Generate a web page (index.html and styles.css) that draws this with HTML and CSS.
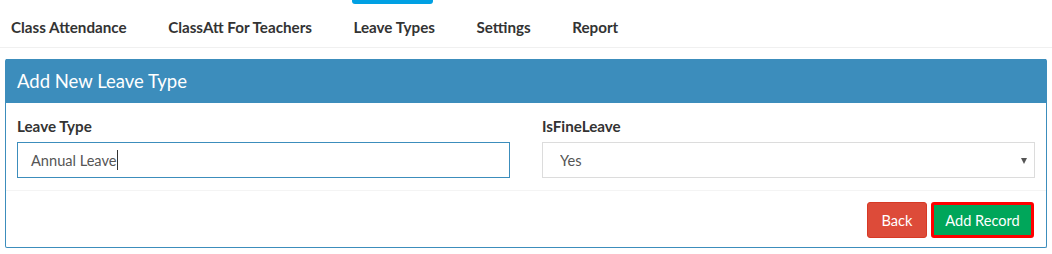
FILE: index.html
```html
<!DOCTYPE html>
<html lang="en">
<head>
    <meta charset="UTF-8">
    <title>Leave Types</title>
    <link rel="stylesheet" href="styles.css">
</head>
<body>
    <nav class="tabs">
        <a href="#">Class Attendance</a>
        <a href="#">ClassAtt For Teachers</a>
        <a href="#" class="active">Leave Types</a>
        <a href="#">Settings</a>
        <a href="#">Report</a>
    </nav>

    <div class="box">
        <div class="box-header">Add New Leave Type</div>

        <div class="box-body">
            <div class="field">
                <label for="leaveType">Leave Type</label>
                <div class="fake-input focused">Annual Leave<span class="caret"></span></div>
            </div>
            <div class="field">
                <label for="isFine">IsFineLeave</label>
                <div class="select-wrap">
                    <select id="isFine">
                        <option>Yes</option>
                        <option>No</option>
                    </select>
                </div>
            </div>
        </div>

        <div class="box-footer">
            <button class="btn btn-back">Back</button>
            <button class="btn btn-add">Add Record</button>
        </div>
    </div>
</body>
</html>
```

FILE: styles.css
```css
* {
    margin: 0;
    padding: 0;
    box-sizing: border-box;
}

body {
    font-family: Lato, "Noto Sans", sans-serif;
    font-size: 14.6px;
    color: #333;
    background: #fff;
}

/* Tabs */
.tabs {
    display: flex;
    gap: 41.5px;
    height: 48px;
    padding-left: 11px;
    border-bottom: 1px solid #f0f0f0;
}

.tabs a {
    position: relative;
    display: flex;
    align-items: center;
    padding-top: 6px;
    font-weight: bold;
    font-size: 15.2px;
    color: #333;
    text-decoration: none;
}

.tabs a.active::before {
    content: "";
    position: absolute;
    top: 0;
    left: -1px;
    right: 2px;
    height: 4px;
    background: #00a0e3;
    border-radius: 0 0 3px 3px;
}

/* Box */
.box {
    margin: 11px 5px 0 5px;
    border: 1px solid #3c8dbc;
    border-top: none;
    border-radius: 2px;
}

.box-header {
    height: 44px;
    padding: 0 11px;
    display: flex;
    align-items: center;
    background: #3c8dbc;
    color: #fff;
    font-size: 18.5px;
}

.box-body {
    display: grid;
    grid-template-columns: 1fr 1fr;
    gap: 32px;
    padding: 13px 11px 12px 11px;
}

.field label {
    display: block;
    height: 21px;
    line-height: 21px;
    margin-bottom: 5px;
    font-weight: bold;
    font-size: 15.2px;
    color: #333;
}

.fake-input,
.select-wrap select {
    width: 100%;
    height: 36px;
    font-family: inherit;
    font-size: 14.6px;
    color: #555;
    background: #fff;
}

.fake-input {
    display: flex;
    align-items: center;
    padding-left: 13px;
    border: 1px solid #3c8dbc;
}

.caret {
    display: inline-block;
    width: 1px;
    height: 20px;
    background: #333;
}

.select-wrap {
    position: relative;
}

.select-wrap select {
    appearance: none;
    padding-left: 17px;
    border: 1px solid #dcdcdc;
    border-radius: 0;
    outline: none;
}

.select-wrap::after {
    content: "";
    position: absolute;
    right: 8px;
    top: 16px;
    border-left: 3.5px solid transparent;
    border-right: 3.5px solid transparent;
    border-top: 6px solid #555;
    pointer-events: none;
}

/* Footer */
.box-footer {
    display: flex;
    justify-content: flex-end;
    gap: 4px;
    padding: 11px 12px 9px 0;
    border-top: 1px solid #f4f4f4;
}

.btn {
    height: 36px;
    padding: 0 13px;
    font-family: inherit;
    font-size: 14.6px;
    color: #fff;
    border-radius: 3px;
    cursor: pointer;
}

.btn-back {
    width: 60px;
    padding: 0;
    background: #dd4b39;
    border: 1px solid #d73925;
}

.btn-add {
    width: 103px;
    padding: 0;
    background: #00a65a;
    border: 3px solid #ff0000;
}
```
